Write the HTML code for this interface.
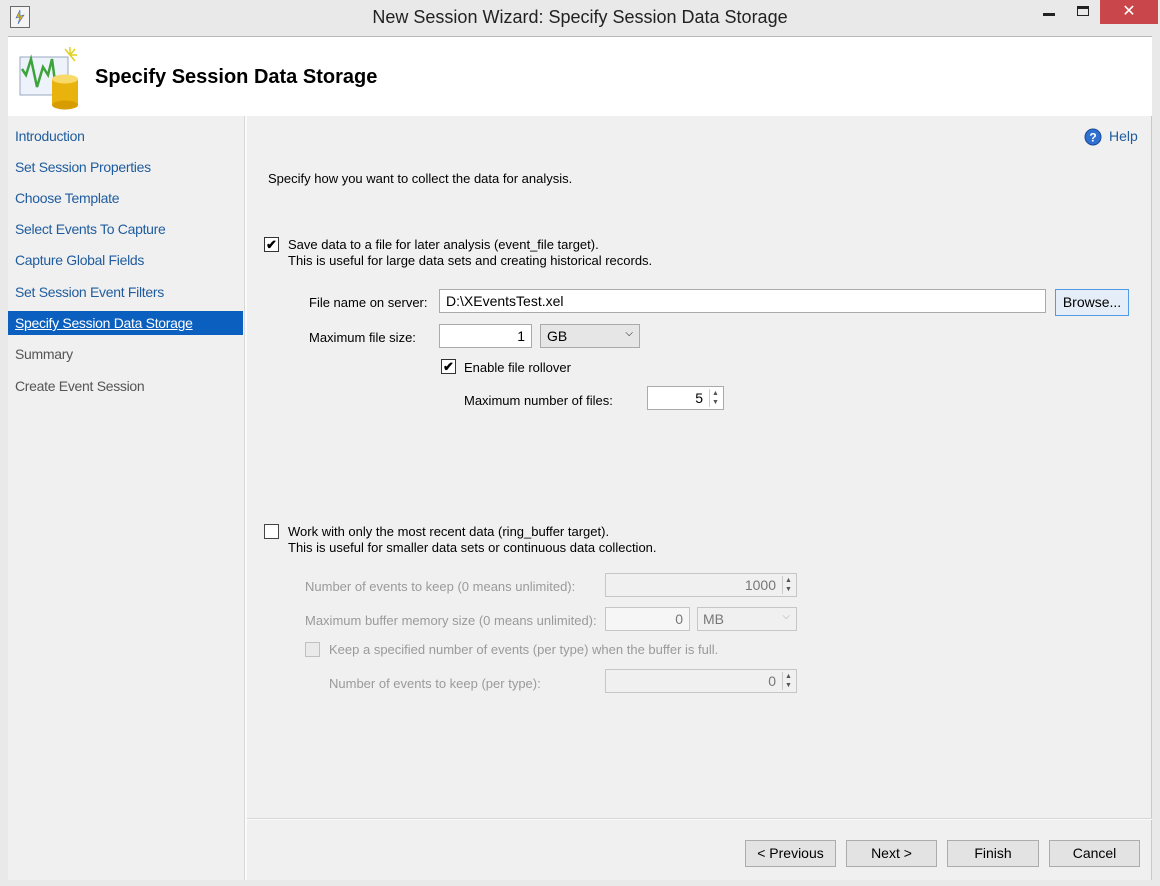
<!DOCTYPE html>
<html><head><meta charset="utf-8"><style>
*{box-sizing:border-box;margin:0;padding:0}
body{width:1160px;height:886px;background:#e9e9e9;font-family:"Liberation Sans",sans-serif;font-size:13px;color:#000;position:relative;overflow:hidden;letter-spacing:0}
.abs{position:absolute}
.title{left:0;top:0;width:1160px;height:36px;text-align:center;font-size:18px;line-height:34px;color:#222}
.close{left:1100px;top:0;width:58px;height:24px;background:#c9464a;color:#fff;text-align:center;font-size:16px;line-height:24px}
.hdr{left:8px;top:36px;width:1144px;height:80px;background:#fff;border-top:1px solid #b8b8b8}
.nav{left:8px;top:116px;width:236px;height:764px;background:#f0f0f0}
.main{left:247px;top:116px;width:905px;height:764px;background:#f0f0f0;border-right:1px solid #c8c8c8}
.sep{left:244px;top:116px;width:3px;height:764px;background:#fafafa;border-left:1px solid #d8d8d8}
.nv{position:absolute;left:15px;color:#1f5c9e;font-size:14px;letter-spacing:-0.3px}
.nvg{color:#555}
.sel{left:8px;top:311px;width:235px;height:24px;background:#0a5fbf}
.cb{position:absolute;width:15px;height:15px;border:1px solid #333;background:#fff;font-size:13px;line-height:13px;text-align:center;font-weight:bold}
.tb{position:absolute;height:24px;background:#fff;border:1px solid #aaa;text-align:right;padding:3px 6px;font-size:14px}
.btn{position:absolute;height:27px;background:#e3e3e3;border:1px solid #acacac;text-align:center;line-height:25px;font-size:14px}
.dis{color:#9a9a9a}
.dtb{position:absolute;height:24px;background:#f0f0f0;border:1px solid #c6c6c6;text-align:right;padding:3px 20px 3px 6px;font-size:14px;color:#777}
.spin{position:absolute;right:2px;top:2px;width:12px;height:18px;border-left:1px solid #ccc;font-size:7px;line-height:9px;text-align:center;color:#555}
</style></head><body>
<div class="abs" style="left:10px;top:6px;width:20px;height:22px;border:1px solid #6a6a6a;background:#f4f4f4"><svg width="18" height="20"><path d="M9 3 L5 11 L9 10 L7 17 L13 8 L9 9 Z" fill="#e2b21a" stroke="#3b6bb5" stroke-width="0.6"/></svg></div>
<div class="abs title">New Session Wizard: Specify Session Data Storage</div>
<div class="abs" style="left:1043px;top:13px;width:12px;height:3px;background:#222"></div>
<div class="abs" style="left:1077px;top:6px;width:12px;height:10px;border:1px solid #222;border-top-width:3px"></div>
<div class="abs close">✕</div>
<div class="abs hdr">
 <svg class="abs" style="left:10px;top:8px" width="72" height="66">
  <rect x="2" y="12" width="48" height="38" fill="#eef2fa" stroke="#9aa8c2"/>
  <path d="M4 24 L8 30 L13 14 L19 42 L25 22 L30 30 L34 14 L38 44" fill="none" stroke="#3da33d" stroke-width="2.5"/>
  <path d="M52 10 l5 -6 M52 10 l7 0 M52 10 l5 6 M52 10 l-5 -6 M52 10 l0 -8" stroke="#e0d020" stroke-width="1.5"/>
  <rect x="34" y="34" width="26" height="26" fill="#e9b30d"/>
  <ellipse cx="47" cy="34" rx="13" ry="4.5" fill="#f8da6a"/>
  <ellipse cx="47" cy="60" rx="13" ry="4.5" fill="#d79c00"/>
 </svg>
 <div class="abs" style="left:87px;top:29px;font-size:20px;font-weight:bold">Specify Session Data Storage</div>
</div>
<div class="abs nav"></div>
<div class="abs sel"></div>
<div class="abs sep"></div>
<div class="nv" style="top:128px">Introduction</div>
<div class="nv" style="top:159px">Set Session Properties</div>
<div class="nv" style="top:190px">Choose Template</div>
<div class="nv" style="top:221px">Select Events To Capture</div>
<div class="nv" style="top:252px">Capture Global Fields</div>
<div class="nv" style="top:284px">Set Session Event Filters</div>
<div class="nv" style="top:315px;color:#fff;text-decoration:underline">Specify Session Data Storage</div>
<div class="nv nvg" style="top:346px">Summary</div>
<div class="nv nvg" style="top:378px">Create Event Session</div>
<div class="abs main"></div>
<svg class="abs" style="left:1084px;top:128px" width="18" height="18"><circle cx="9" cy="9" r="8" fill="#2f6fd0" stroke="#1a4a9a"/><text x="9" y="13.5" font-size="12" font-weight="bold" fill="#fff" text-anchor="middle" font-family="Liberation Sans">?</text></svg>
<div class="abs" style="left:1109px;top:128px;font-size:14px;color:#1f5c9e">Help</div>
<div class="abs" style="left:268px;top:171px">Specify how you want to collect the data for analysis.</div>
<div class="cb" style="left:264px;top:237px">✔</div>
<div class="abs" style="left:288px;top:237px;line-height:16px">Save data to a file for later analysis (event_file target).<br>This is useful for large data sets and creating historical records.</div>
<div class="abs" style="left:309px;top:295px">File name on server:</div>
<div class="tb" style="left:439px;top:289px;width:607px;text-align:left">D:\XEventsTest.xel</div>
<div class="btn" style="left:1055px;top:289px;width:74px;border:1px solid #4f9be6;background:#e5eef8">Browse...</div>
<div class="abs" style="left:309px;top:330px">Maximum file size:</div>
<div class="tb" style="left:439px;top:324px;width:93px">1</div>
<div class="tb" style="left:540px;top:324px;width:100px;background:#e6e6e6;text-align:left">GB<span style="position:absolute;right:6px;top:3px;font-size:10px">⌵</span></div>
<div class="cb" style="left:441px;top:359px">✔</div>
<div class="abs" style="left:464px;top:360px">Enable file rollover</div>
<div class="abs" style="left:464px;top:393px">Maximum number of files:</div>
<div class="tb" style="left:647px;top:386px;width:77px;padding-right:20px">5<div class="spin">▲<br>▼</div></div>
<div class="cb" style="left:264px;top:524px;border-color:#444"></div>
<div class="abs" style="left:288px;top:524px;line-height:16px">Work with only the most recent data (ring_buffer target).<br>This is useful for smaller data sets or continuous data collection.</div>
<div class="abs dis" style="left:305px;top:579px">Number of events to keep (0 means unlimited):</div>
<div class="dtb" style="left:605px;top:573px;width:192px">1000<div class="spin">▲<br>▼</div></div>
<div class="abs dis" style="left:305px;top:613px">Maximum buffer memory size (0 means unlimited):</div>
<div class="dtb" style="left:605px;top:607px;width:85px;padding-right:6px;background:#f6f6f6">0</div>
<div class="dtb" style="left:697px;top:607px;width:100px;text-align:left;padding-left:5px">MB<span style="position:absolute;right:6px;top:3px;font-size:10px;color:#aaa">⌵</span></div>
<div class="cb" style="left:305px;top:642px;border-color:#c0c0c0;background:#eaeaea"></div>
<div class="abs dis" style="left:329px;top:642px">Keep a specified number of events (per type) when the buffer is full.</div>
<div class="abs dis" style="left:329px;top:676px">Number of events to keep (per type):</div>
<div class="dtb" style="left:605px;top:669px;width:192px">0<div class="spin">▲<br>▼</div></div>
<div class="abs" style="left:247px;top:818px;width:905px;height:2px;border-top:1px solid #d8d8d8;background:#fafafa"></div>
<div class="btn" style="left:745px;top:840px;width:91px">&lt; Previous</div>
<div class="btn" style="left:846px;top:840px;width:91px">Next &gt;</div>
<div class="btn" style="left:947px;top:840px;width:92px">Finish</div>
<div class="btn" style="left:1049px;top:840px;width:91px">Cancel</div>
</body></html>
